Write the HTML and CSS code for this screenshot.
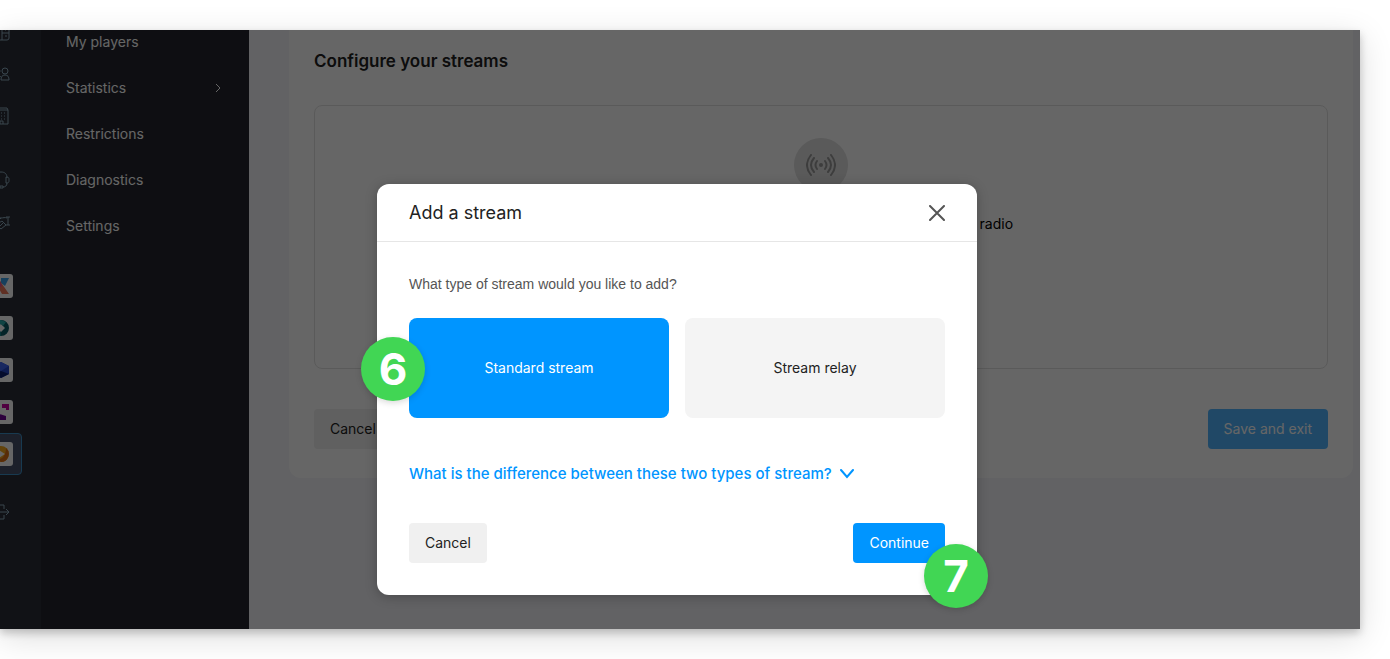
FILE: index.html
```html
<!DOCTYPE html>
<html lang="en">
<head>
<meta charset="utf-8">
<meta name="viewport" content="width=device-width, initial-scale=1">
<title>Add a stream</title>
<link rel="stylesheet" href="styles.css">
</head>
<body>

<div class="app">

	<div class="rail">
		<div class="rail-group">
			<a class="rail-item" href="#" aria-label="Hosting">
				<svg class="icon" viewBox="0 0 18 18"><rect x="1" y="1" width="16" height="16" rx="2"/><path d="M10 1v16M10 10h7M10 5h7M13 7h1M13 13h2"/></svg>
			</a>
			<a class="rail-item" href="#" aria-label="Users">
				<svg class="icon" viewBox="0 0 18 18"><circle cx="5" cy="6" r="3"/><circle cx="13" cy="6" r="3"/><path d="M1 15c0-3 1-5 4-5 2 0 3 1 4 2M9 15c0-3 1-5 4-5s4 2 4 5zM1 15h5"/></svg>
			</a>
			<a class="rail-item" href="#" aria-label="Organisation">
				<svg class="icon" viewBox="0 0 18 18"><path d="M2 3h14v14H2zM3 1h12l1 2M8 17v-3h3v3"/><path d="M5 6h1M9 6h1M12 6h1M5 9h1M9 9h1M12 9h1M5 12h1M9 12h1M12 12h1"/></svg>
			</a>
		</div>
		<div class="rail-group">
			<a class="rail-item" href="#" aria-label="Support">
				<svg class="icon" viewBox="0 0 18 18"><path d="M3 7C3 3 5 1 9 1s6 2 6 6M14 6c3 0 3 1 3 3s0 3-3 3zM4 6C1 6 1 7 1 9s0 3 3 3zM15 12c0 3-2 4-4 4M8 15h3v2H8z"/></svg>
			</a>
			<a class="rail-item" href="#" aria-label="Partners">
				<svg class="icon" viewBox="0 0 18 18"><path d="M0 4h3v8H0M18 4h-4M16 4v8M18 12h-4M3 5c3-1 4 0 6 0s4-1 6 0M9 5L6 8c1 2 3 1 4 0l4 4-5 4-6-5M11 10l-3 3"/></svg>
			</a>
		</div>
		<div class="rail-group">
			<a class="rail-item" href="#" aria-label="Product one">
				<svg class="tile" viewBox="0 0 24 24"><path fill="#3aa0e8" d="M12 4h8l-4 8-4-3z"/><path fill="#f0785a" d="M9 4l11 16h-7l-4-7-3 7H4z"/><path fill="#e8508c" d="M4 4h6l3 8-3 2z"/></svg>
			</a>
			<a class="rail-item" href="#" aria-label="Product two">
				<svg class="tile" viewBox="0 0 24 24"><path fill="#0a5a64" d="M12 4a8 8 0 0 1 0 16v-4l4-4-4-4z"/><path fill="#28aaaa" d="M12 4l5 2-3 4-2-2-4 4-4-1c1-4 4-7 8-7z"/><path fill="#0e7f86" d="M4 12h4l4 4v4a8 8 0 0 1-8-8z"/></svg>
			</a>
			<a class="rail-item" href="#" aria-label="Product three">
				<svg class="tile" viewBox="0 0 24 24"><path fill="#2346c8" d="M12 4l8 4v8l-8 4-8-4V8z"/><path fill="#3c64f0" d="M12 4l8 4-8 5-8-5z"/><path fill="#0a1e6e" d="M12 13l8 3-8 4-8-4z"/></svg>
			</a>
			<a class="rail-item" href="#" aria-label="Product four">
				<svg class="tile" viewBox="0 0 24 24"><path fill="#c800a0" d="M13 4h7v6h-3V8h-4zM4 4h6v4H8v4H4z"/><path fill="#6e0096" d="M8 12c2 3 5 2 9 4v4H4v-8z"/></svg>
			</a>
			<a class="rail-item rail-active" href="#" aria-label="Radio streaming">
				<svg class="tile" viewBox="0 0 24 24"><circle cx="12" cy="12" r="8" fill="#f5a81c"/><path fill="#dc6e14" d="M17 6a8 8 0 0 1-5 14l-4-3c6 1 9-5 9-11z"/><path fill="#fff" d="M10 8l6 4-6 4z"/></svg>
			</a>
		</div>
		<div class="rail-group rail-last">
			<a class="rail-item" href="#" aria-label="Log out">
				<svg class="icon" viewBox="0 0 18 18"><path d="M12 6V2H2v14h10v-4M6 9h11M14 6l3 3-3 3"/></svg>
			</a>
		</div>
	</div>

	<nav class="menu">
		<a href="#">My players</a>
		<a href="#">Statistics <svg class="menu-arrow" viewBox="0 0 6 10"><path d="M1 1l4 4-4 4"/></svg></a>
		<a href="#">Restrictions</a>
		<a href="#">Diagnostics</a>
		<a href="#">Settings</a>
	</nav>

	<main class="content">
		<section class="panel">
			<h1>Configure your streams</h1>
			<div class="empty">
				<div class="empty-icon">
					<svg viewBox="0 0 30 22"><circle cx="15" cy="11" r="2"/><path d="M11 7q-3 4 0 8M8 4q-6 7 0 14M5 1q-8 10 0 20M19 7q3 4 0 8M22 4q6 7 0 14M25 1q8 10 0 20"/></svg>
				</div>
				<p>Start by adding the first stream, then link this to your radio</p>
			</div>
			<div class="actions">
				<button class="btn btn-grey" type="button">Cancel</button>
				<button class="btn btn-off" type="button">Save and exit</button>
			</div>
		</section>
	</main>

	<div class="overlay">
		<div class="modal" role="dialog" aria-labelledby="modal-title">
			<div class="modal-head">
				<h2 id="modal-title">Add a stream</h2>
				<button class="close" type="button" aria-label="Close">
					<svg viewBox="0 0 16 16"><path d="M1 1l14 14M15 1L1 15"/></svg>
				</button>
			</div>
			<div class="modal-body">
				<p class="question">What type of stream would you like to add?</p>
				<div class="choices">
					<button class="choice choice-on" type="button">Standard stream</button>
					<button class="choice" type="button">Stream relay</button>
				</div>
				<a class="more" href="#">What is the difference between these two types of stream?
					<svg viewBox="0 0 14 10"><path d="M1 1l6 7 6-7"/></svg></a>
				<div class="actions">
					<button class="btn btn-grey" type="button">Cancel</button>
					<button class="btn btn-blue" type="button">Continue</button>
				</div>
			</div>
			<span class="step step-6">6</span>
			<span class="step step-7">7</span>
		</div>
	</div>

</div>

</body>
</html>
```
FILE: styles.css
```css
* {
	box-sizing: border-box;
}
body {
	margin: 0;
	padding: 30px 30px 30px 0;
	background: #fff;
	font-family: Inter, "Liberation Sans", Arial, sans-serif;
	font-size: 14px;
	line-height: 20px;
	color: #222;
	overflow: hidden;
}
h1, h2, p {
	margin: 0;
}
a {
	text-decoration: none;
}
button {
	border: 0;
	font: inherit;
	cursor: pointer;
}
svg {
	display: block;
	fill: none;
}

.app {
	position: relative;
	display: flex;
	min-height: calc(100vh - 60px);
	background: #f5f5fa;
	box-shadow: 0 4px 8px rgba(0, 0, 0, 0.2), 0 8px 32px rgba(0, 0, 0, 0.14);
}

/* icon rail, scrolled partly out of the window */
.rail {
	flex: none;
	width: 80px;
	margin-left: -39px;
	background: #2b2f39;
	display: flex;
	flex-direction: column;
	gap: 22px;
	overflow: hidden;
}
.rail-group {
	display: flex;
	flex-direction: column;
	align-items: center;
}
.rail-group:first-child {
	margin-top: -19px;
}
.rail-last {
	margin-top: -6px;
}
.rail-item {
	width: 42px;
	height: 42px;
	display: flex;
	align-items: center;
	justify-content: center;
	border-radius: 4px;
}
.rail-active {
	background: #46506a;
	border: 1px solid #3c91c8;
}
.icon {
	width: 18px;
	height: 18px;
	stroke: #8fadc0;
}
.tile {
	width: 24px;
	height: 24px;
	border-radius: 3px;
	background: #fff;
}

.menu {
	flex: none;
	width: 208px;
	background: #23252d;
}
.menu a {
	display: flex;
	align-items: center;
	justify-content: space-between;
	height: 46px;
	padding: 0 28px 0 25px;
	color: #fff;
}
.menu a:first-child {
	margin-top: -11px;
}
.menu-arrow {
	width: 6px;
	height: 10px;
	stroke: #fff;
}

.content {
	flex: 1;
	padding: 0 7px 0 40px;
}
.panel {
	padding: 19px 25px 29px;
	background: #fff;
	border-radius: 0 0 12px 12px;
}
.panel h1 {
	margin-bottom: 32px;
	font-size: 17px;
	line-height: 24px;
	font-weight: 600;
}
.empty {
	min-height: 264px;
	margin-bottom: 40px;
	padding-top: 32px;
	border: 1px solid #e2e2e2;
	border-radius: 8px;
	text-align: center;
	color: #000;
}
.empty-icon {
	width: 54px;
	height: 54px;
	margin: 0 auto 22px;
	display: flex;
	align-items: center;
	justify-content: center;
	border-radius: 50%;
	background: #e0e0e0;
}
.empty-icon svg {
	width: 30px;
	height: 22px;
	stroke: #999;
	stroke-width: 2;
	stroke-linecap: round;
}
.empty-icon circle {
	fill: #999;
	stroke: none;
}

.actions {
	display: flex;
	justify-content: space-between;
}
.btn {
	height: 40px;
	padding: 0 16px;
	border-radius: 4px;
}
.btn-grey {
	background: #f0f0f0;
	color: #222;
}
.btn-blue {
	background: #0095ff;
	color: #fff;
}
.btn-off {
	background: #50b5ff;
	color: #fff;
}

.overlay {
	position: absolute;
	inset: 0;
	display: flex;
	justify-content: center;
	align-items: flex-start;
	padding: 154px 6px 0 0;
	background: rgba(0, 0, 0, 0.6);
}
.modal {
	position: relative;
	width: 600px;
	max-width: 100%;
	background: #fff;
	border-radius: 12px;
	box-shadow: 0 2px 12px rgba(0, 0, 0, 0.25);
}
.modal-head {
	display: flex;
	justify-content: space-between;
	align-items: center;
	height: 58px;
	padding: 0 32px;
	border-bottom: 1px solid #e6e6e6;
}
.modal-head h2 {
	font-size: 18px;
	line-height: 24px;
	font-weight: 400;
}
.close {
	padding: 0;
	background: none;
}
.close svg {
	width: 16px;
	height: 16px;
	stroke: #555;
	stroke-width: 2;
	stroke-linecap: round;
}
.modal-body {
	padding: 32px;
}
.question {
	margin-bottom: 24px;
	font-family: "Liberation Sans", Arial, sans-serif;
	color: #555;
}
.choices {
	display: flex;
	gap: 16px;
	margin-bottom: 44px;
}
.choice {
	flex: 1;
	height: 100px;
	border-radius: 8px;
	background: #f4f4f4;
	color: #222;
}
.choice-on {
	background: #0095ff;
	color: #fff;
}
.more {
	display: flex;
	align-items: center;
	gap: 8px;
	margin-bottom: 37px;
	font-size: 15px;
	line-height: 24px;
	font-weight: 500;
	color: #0095ff;
}
.more svg {
	width: 14px;
	height: 10px;
	stroke: #0095ff;
	stroke-width: 2;
	stroke-linecap: round;
}

/* numbered markers */
.step {
	position: absolute;
	width: 64px;
	height: 64px;
	border-radius: 50%;
	background: #41d654;
	box-shadow: 0 2px 6px rgba(0, 0, 0, 0.15);
	color: #fff;
	font-size: 44px;
	line-height: 64px;
	font-weight: 700;
	text-align: center;
}
.step-6 {
	left: -16px;
	top: 153px;
}
.step-7 {
	right: -11px;
	bottom: -13px;
}
```
